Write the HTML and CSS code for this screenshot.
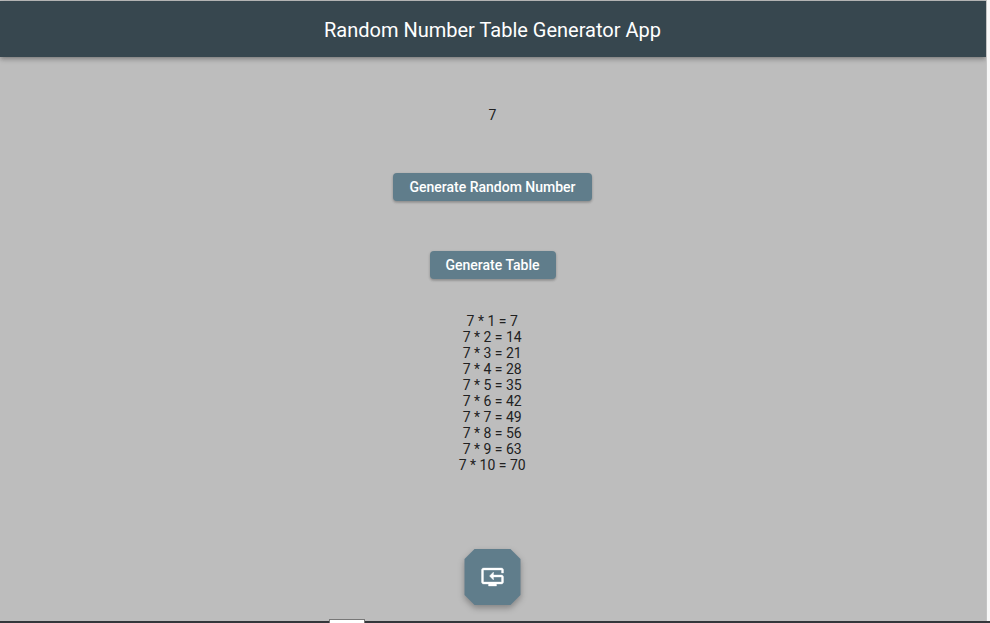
FILE: index.html
```
<!DOCTYPE html>
<html lang="en">
<head>
<meta charset="utf-8">
<title>Random Number Table Generator App</title>
<link rel="stylesheet" href="styles.css">
</head>
<body>
<div class="window">
  <div class="app">
    <header class="app-bar">Random Number Table Generator App</header>
    <main class="content">
      <div class="number">7</div>
      <button class="button">Generate Random Number</button>
      <button class="button">Generate Table</button>
      <div class="table">
        <div>7 * 1 = 7</div>
        <div>7 * 2 = 14</div>
        <div>7 * 3 = 21</div>
        <div>7 * 4 = 28</div>
        <div>7 * 5 = 35</div>
        <div>7 * 6 = 42</div>
        <div>7 * 7 = 49</div>
        <div>7 * 8 = 56</div>
        <div>7 * 9 = 63</div>
        <div>7 * 10 = 70</div>
      </div>
      <button class="fab" aria-label="Reset">
        <svg width="57" height="56" viewBox="0 0 57 56">
          <path class="fab-shape" d="M10.5 0H46.5L56.5 10V46L46.5 56H10.5L.5 46V10Z"/>
          <path class="fab-icon" transform="translate(16.5 16)" d="M21 8h2V5c0-1.1-.9-2-2-2H3c-1.1 0-2 .9-2 2v12c0 1.1.9 2 2 2h5v2h8v-2h5c1.1 0 2-.9 2-2v-5c0-1.1-.9-2-2-2h-8V7l-4 4 4 4v-3h8v5H3V5h18v3z"/>
        </svg>
      </button>
    </main>
  </div>
  <footer class="taskbar"><div class="tab"></div></footer>
</div>
</body>
</html>
```
FILE: styles.css
```
* {
  box-sizing: border-box;
}

body {
  margin: 0;
  background: #f8f8f8;
  font: 14px/16px Roboto, sans-serif;
  color: #212121;
}

.window {
  height: 623px;
  display: flex;
  flex-direction: column;
  overflow: hidden;
}

.app {
  width: 987px;
  flex: 1;
  padding-top: 1px;
  border-right: 1px solid #c4c4c4;
  background: #bdbdbd;
  overflow: hidden;
}

.app-bar {
  height: 56px;
  display: flex;
  align-items: center;
  justify-content: center;
  padding: 2px 1px 0 0;
  background: #37474f;
  color: #fff;
  font-size: 20px;
  line-height: 24px;
  font-weight: 400;
  box-shadow: 0 2px 4px -1px rgba(0, 0, 0, .2), 0 3px 5px rgba(0, 0, 0, .14), 0 1px 6px rgba(0, 0, 0, .08);
}

.content {
  display: flex;
  flex-direction: column;
  align-items: center;
  padding: 50px 1px 0 0;
}

.number {
  margin-bottom: 50px;
}

.button {
  height: 28px;
  margin-bottom: 50px;
  padding: 0 16px;
  border: 0;
  border-radius: 4px;
  background: #607d8b;
  color: #fff;
  font: 500 14px/16px Roboto, sans-serif;
  box-shadow: 0 1px 3px rgba(0, 0, 0, .2), 0 2px 2px rgba(0, 0, 0, .1);
}

.table {
  margin: -16px 0 76px;
  padding-right: .6px;
  text-align: center;
}

.fab {
  width: 57px;
  height: 56px;
  padding: 0;
  border: 0;
  background: none;
  filter: drop-shadow(0 3px 3px rgba(0, 0, 0, .3));
}

.fab svg {
  display: block;
}

.fab-shape {
  fill: #607d8b;
}

.fab-icon {
  fill: #fff;
  stroke: #fff;
  stroke-width: .35;
}

.taskbar {
  height: 2px;
  padding-left: 329px;
  border-top: 1px solid #34363a;
  background: #34383c;
}

.tab {
  position: relative;
  top: -3px;
  width: 36px;
  height: 5px;
  border: 1px solid #777;
  border-bottom: 0;
  background: #fff;
}
```
